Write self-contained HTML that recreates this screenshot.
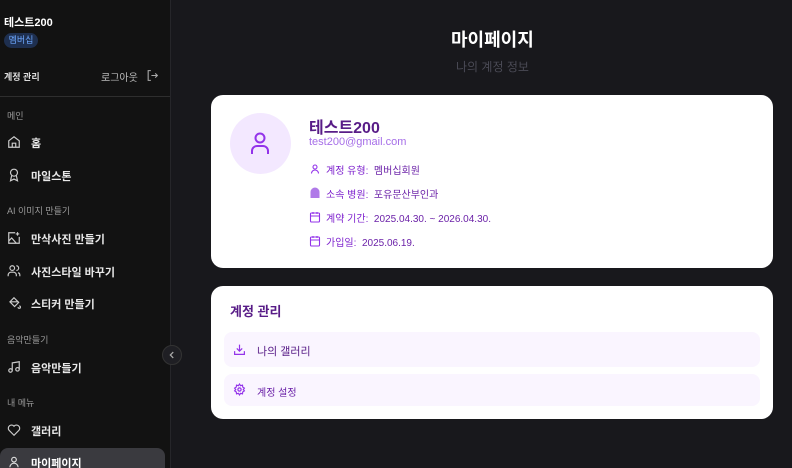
<!DOCTYPE html>
<html><head><meta charset="utf-8"><style>
*{margin:0;padding:0;box-sizing:border-box}
html,body{width:792px;height:468px;overflow:hidden}
body{background:#18181c;font-family:"Liberation Sans","Noto Sans CJK KR",sans-serif;position:relative}
.sb{position:absolute;left:0;top:0;width:171px;height:468px;background:#121212;border-right:1px solid #26262a;overflow:hidden}
.a{position:absolute;white-space:nowrap}
.sec{font-size:9px;color:#9a9a9a}
.nav{font-size:11px;font-weight:bold;color:#e8e8e8}
.ic{position:absolute}
.card{position:absolute;left:211px;width:562px;background:#fff;border-radius:12px}
.row{position:absolute;left:309px;font-size:10px;color:#6b21a8;white-space:nowrap}
.row b{font-weight:normal;color:#7e22ce}
.item{position:absolute;left:224px;width:536px;background:#faf5ff;border-radius:8px}
</style></head><body>
<div class="sb">
<div class="a" style="left:4px;top:14px;font-size:11px;font-weight:bold;color:#fff">테스트200</div>
<div class="a" style="left:4px;top:33px;width:34px;height:15px;border-radius:8px;background:#1e2f4f;color:#6ea8ff;font-size:9px;text-align:center;line-height:15px">멤버십</div>
<div class="a" style="left:4px;top:70px;font-size:9px;font-weight:bold;color:#ddd">계정 관리</div>
<div class="a" style="left:101px;top:69px;font-size:10px;color:#bbb">로그아웃</div>
<svg class="ic" style="left:146px;top:69px" width="13" height="13" viewBox="0 0 24 24" fill="none" stroke="#aaa" stroke-width="2"><path d="M9 3H4v18h5M10 12h11M17 8l4 4-4 4"/></svg>
<div style="position:absolute;left:0;top:96px;width:171px;height:1px;background:#2e2e2e"></div>
<div class="a sec" style="left:7px;top:109px">메인</div>
<svg class="ic" style="left:7px;top:135px" width="14" height="14" viewBox="0 0 24 24" fill="none" stroke="#ccc" stroke-width="2"><path d="M3 10l9-7 9 7v11H3zM9 21v-7h6v7"/></svg>
<div class="a nav" style="left:31px;top:135px">홈</div>
<svg class="ic" style="left:7px;top:168px" width="14" height="14" viewBox="0 0 24 24" fill="none" stroke="#ccc" stroke-width="2"><circle cx="12" cy="8" r="6"/><path d="M8 13l-2 9 6-3 6 3-2-9"/></svg>
<div class="a nav" style="left:31px;top:168px">마일스톤</div>
<div class="a sec" style="left:7px;top:204px">AI 이미지 만들기</div>
<svg class="ic" style="left:7px;top:231px" width="14" height="14" viewBox="0 0 24 24" fill="none" stroke="#ccc" stroke-width="2"><path d="M14 3H3v18h18V10M3 17l5-5 8 9M18 2v6M15 5h6"/></svg>
<div class="a nav" style="left:31px;top:231px">만삭사진 만들기</div>
<svg class="ic" style="left:7px;top:264px" width="14" height="14" viewBox="0 0 24 24" fill="none" stroke="#ccc" stroke-width="2"><circle cx="9" cy="7" r="4"/><path d="M2 21v-2a5 5 0 0 1 5-5h4a5 5 0 0 1 5 5v2M16 3a4 4 0 0 1 0 8M22 21v-2a4 4 0 0 0-3-4"/></svg>
<div class="a nav" style="left:31px;top:264px">사진스타일 바꾸기</div>
<svg class="ic" style="left:7px;top:296px" width="14" height="14" viewBox="0 0 24 24" fill="none" stroke="#ccc" stroke-width="2"><path d="M12 3l8 8-7 7-8-8zM5 10h15M21 17a2 2 0 1 1-2 2"/></svg>
<div class="a nav" style="left:31px;top:296px">스티커 만들기</div>
<div class="a sec" style="left:7px;top:333px">음악만들기</div>
<svg class="ic" style="left:7px;top:360px" width="14" height="14" viewBox="0 0 24 24" fill="none" stroke="#ccc" stroke-width="2"><path d="M9 18V5l12-2v13"/><circle cx="6" cy="18" r="3"/><circle cx="18" cy="16" r="3"/></svg>
<div class="a nav" style="left:31px;top:360px">음악만들기</div>
<div class="a sec" style="left:7px;top:396px">내 메뉴</div>
<svg class="ic" style="left:7px;top:423px" width="14" height="14" viewBox="0 0 24 24" fill="none" stroke="#ccc" stroke-width="2"><path d="M12 21l-8.5-8.5a5 5 0 0 1 8.5-7 5 5 0 0 1 8.5 7z"/></svg>
<div class="a nav" style="left:31px;top:423px">갤러리</div>
<div style="position:absolute;left:0;top:448px;width:165px;height:30px;border-radius:8px;background:#3a3a3f"></div>
<svg class="ic" style="left:7px;top:455px" width="14" height="14" viewBox="0 0 24 24" fill="none" stroke="#ddd" stroke-width="2"><circle cx="12" cy="8" r="4"/><path d="M5 21a7 7 0 0 1 14 0"/></svg>
<div class="a nav" style="left:31px;top:455px;color:#fff">마이페이지</div>
</div>
<div style="position:absolute;left:162px;top:345px;width:20px;height:20px;border-radius:50%;background:#1f1f24;border:1px solid #333"></div>
<svg class="ic" style="left:167px;top:350px" width="10" height="10" viewBox="0 0 24 24" fill="none" stroke="#aaa" stroke-width="3"><path d="M15 5l-7 7 7 7"/></svg>

<div class="a" style="left:451px;top:26px;font-size:18px;font-weight:bold;color:#fff">마이페이지</div>
<div class="a" style="left:456px;top:58px;font-size:12px;color:#4a4a55">나의 계정 정보</div>

<div class="card" style="top:95px;height:173px"></div>
<div style="position:absolute;left:230px;top:113px;width:61px;height:61px;border-radius:50%;background:#f3e8ff"></div>
<svg class="ic" style="left:248px;top:131px" width="24" height="24" viewBox="0 0 24 24" fill="none" stroke="#9333ea" stroke-width="2"><circle cx="12" cy="7" r="4.5"/><path d="M4 23v-3a5 5 0 0 1 5-5h6a5 5 0 0 1 5 5v3"/></svg>
<div class="a" style="left:309px;top:114px;font-size:16px;font-weight:bold;color:#581c87">테스트200</div>
<div class="a" style="left:309px;top:136px;font-size:11px;color:#a66ee8">test200@gmail.com</div>
<svg class="ic" style="left:309px;top:163px" width="12" height="12" viewBox="0 0 24 24" fill="none" stroke="#9333ea" stroke-width="2.2"><circle cx="12" cy="8" r="4"/><path d="M5 21a7 7 0 0 1 14 0"/></svg>
<div class="row" style="left:326px;top:162px"><b>계정 유형:</b>&nbsp; 멤버십회원</div>
<svg class="ic" style="left:309px;top:187px" width="12" height="12" viewBox="0 0 24 24" fill="#b07ae8"><path d="M3 22V10a9 9 0 0 1 18 0v12z"/></svg>
<div class="row" style="left:326px;top:186px"><b>소속 병원:</b>&nbsp; 포유문산부인과</div>
<svg class="ic" style="left:309px;top:211px" width="12" height="12" viewBox="0 0 24 24" fill="none" stroke="#9333ea" stroke-width="2.2"><rect x="3" y="4" width="18" height="18" rx="2"/><path d="M3 10h18M8 2v4M16 2v4"/></svg>
<div class="row" style="left:326px;top:210px"><b>계약 기간:</b>&nbsp; 2025.04.30. ~ 2026.04.30.</div>
<svg class="ic" style="left:309px;top:235px" width="12" height="12" viewBox="0 0 24 24" fill="none" stroke="#9333ea" stroke-width="2.2"><rect x="3" y="4" width="18" height="18" rx="2"/><path d="M3 10h18M8 2v4M16 2v4"/></svg>
<div class="row" style="left:326px;top:234px"><b>가입일:</b>&nbsp; 2025.06.19.</div>

<div class="card" style="top:286px;height:133px"></div>
<div class="a" style="left:230px;top:301px;font-size:13px;font-weight:bold;color:#581c87">계정 관리</div>
<div class="item" style="top:332px;height:35px"></div>
<svg class="ic" style="left:233px;top:343px" width="13" height="13" viewBox="0 0 24 24" fill="none" stroke="#9333ea" stroke-width="2.2"><path d="M12 3v12M7 10l5 5 5-5M3 15v6h18v-6"/></svg>
<div class="a" style="left:257px;top:343px;font-size:11px;color:#581c87">나의 갤러리</div>
<div class="item" style="top:374px;height:32px"></div>
<svg class="ic" style="left:233px;top:383px" width="13" height="13" viewBox="0 0 24 24" fill="none" stroke="#9333ea" stroke-width="2.2"><circle cx="12" cy="12" r="3"/><path d="M12 2l2 3 3.5-1 .5 3.5 3 2-2 2.5 2 2.5-3 2-.5 3.5-3.5-1-2 3-2-3-3.5 1-.5-3.5-3-2 2-2.5-2-2.5 3-2 .5-3.5 3.5 1z"/></svg>
<div class="a" style="left:257px;top:384px;font-size:10px;color:#6b21a8">계정 설정</div>
</body></html>
